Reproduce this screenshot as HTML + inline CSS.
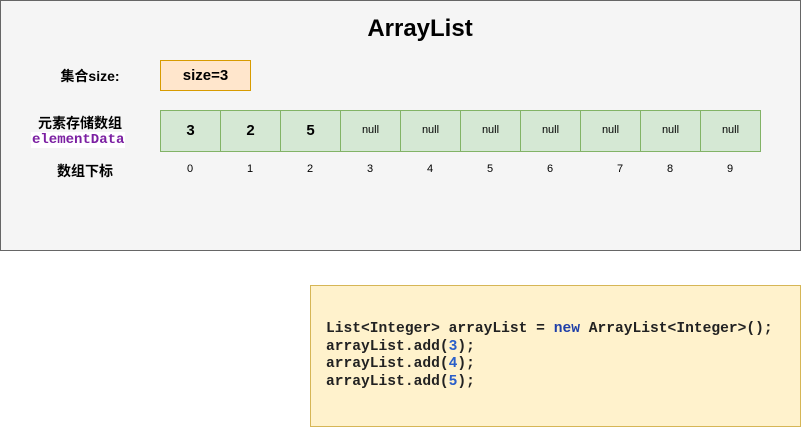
<!DOCTYPE html>
<html><head><meta charset="utf-8"><style>
body{margin:0;width:801px;height:426px;background:#fff;position:relative;overflow:hidden;font-family:"Liberation Sans","Noto Sans CJK SC",sans-serif}
.a{position:absolute}
.outer{left:0;top:0;width:799px;height:249px;background:#f5f5f5;border:1px solid #666}
.title{left:0;width:840px;top:15px;text-align:center;font-size:24px;font-weight:bold;color:#000}
.lbl{font-size:14px;font-weight:bold;color:#000;text-align:center}
.size{left:160px;top:60px;width:89px;height:29px;background:#ffe6cc;border:1px solid #d79b00;text-align:center;line-height:29px;font-size:15px;font-weight:bold}
.cell{top:110px;width:59px;height:40px;background:#d5e8d4;border:1px solid #82b366;text-align:center;line-height:40px}
.b{font-size:15px;font-weight:bold}
.n{font-size:11px;line-height:38px}
.idx{top:163px;font-size:11px;width:20px;text-align:center}
.code{left:310px;top:285px;width:489px;height:140px;background:#fff2cc;border:1px solid #d6b656}
pre{position:absolute;left:326px;top:321px;margin:0;font-family:"Liberation Mono",monospace;font-size:14.6px;line-height:17.7px;color:#222;font-weight:bold}
.k{color:#1f3fa8;font-weight:bold}.num{color:#2b5fc9}
</style></head><body>
<div class="a outer"></div>
<div class="a title">ArrayList</div>
<div class="a lbl" style="left:40px;top:66px;width:100px">集合size:</div>
<div class="a size">size=3</div>
<div class="a lbl" style="left:20px;top:113px;width:120px">元素存储数组</div>
<div class="a" style="left:31px;top:132px;background:#fff;color:#7b1fa2;font-family:'Liberation Mono',monospace;font-weight:bold;font-size:14px;padding:0 1px">elementData</div>
<div class="a lbl" style="left:35px;top:161px;width:100px">数组下标</div>
<div class="a cell b" style="left:160px">3</div>
<div class="a cell b" style="left:220px">2</div>
<div class="a cell b" style="left:280px">5</div>
<div class="a cell n" style="left:340px">null</div>
<div class="a cell n" style="left:400px">null</div>
<div class="a cell n" style="left:460px">null</div>
<div class="a cell n" style="left:520px">null</div>
<div class="a cell n" style="left:580px">null</div>
<div class="a cell n" style="left:640px">null</div>
<div class="a cell n" style="left:700px">null</div>
<div class="a idx" style="left:180px">0</div>
<div class="a idx" style="left:240px">1</div>
<div class="a idx" style="left:300px">2</div>
<div class="a idx" style="left:360px">3</div>
<div class="a idx" style="left:420px">4</div>
<div class="a idx" style="left:480px">5</div>
<div class="a idx" style="left:540px">6</div>
<div class="a idx" style="left:610px">7</div>
<div class="a idx" style="left:660px">8</div>
<div class="a idx" style="left:720px">9</div>
<div class="a code"></div>
<pre>List&lt;Integer&gt; arrayList = <span class="k">new</span> ArrayList&lt;Integer&gt;();
arrayList.add(<span class="num">3</span>);
arrayList.add(<span class="num">4</span>);
arrayList.add(<span class="num">5</span>);</pre>
</body></html>
